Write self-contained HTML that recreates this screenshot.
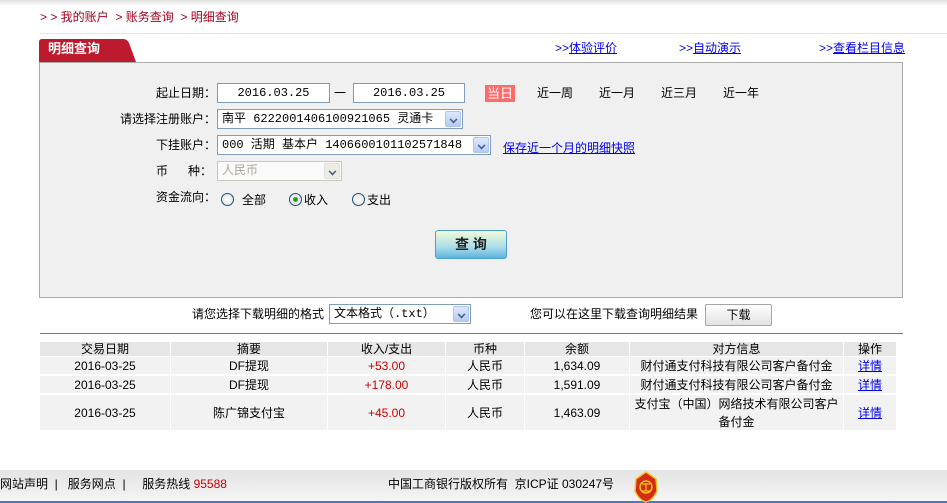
<!DOCTYPE html>
<html><head><meta charset="utf-8"><style>
*{margin:0;padding:0;box-sizing:border-box}
body{width:947px;height:503px;position:relative;background:#fff;font-family:"Liberation Sans","Noto Sans CJK SC","WenQuanYi Zen Hei",sans-serif;font-size:12px;color:#000;overflow:hidden}
.a{position:absolute;white-space:nowrap;line-height:14px}
.topsh{position:absolute;left:0;top:0;width:947px;height:6px;background:linear-gradient(#e0e0e0,#fff)}
.red{color:#a8001e}
a,.lk{color:#0000ee;text-decoration:underline}
.inp{position:absolute;background:#fff;border:1px solid #7f9db9;height:20px;line-height:18px;font-size:12px;padding-left:4px;white-space:nowrap;font-family:"Liberation Mono","Noto Sans CJK SC",monospace}
.arr{position:absolute;right:1px;top:1px;width:16px;height:16px;background:linear-gradient(#dde8fe,#b5cbf5);border:1px solid #b0c4ee;border-radius:2px}
.arr:after{content:"";position:absolute;left:4px;top:4px;width:5px;height:5px;border-right:2px solid #4d6185;border-bottom:2px solid #4d6185;transform:rotate(45deg) scale(.8)}
.rad{position:absolute;width:13px;height:13px;border:1px solid #1c5180;border-radius:50%;background:radial-gradient(#fff,#dcdcd6)}
.row{position:absolute;left:40px;width:856px}
.c{position:absolute;top:0;height:100%;display:flex;align-items:center;justify-content:center;text-align:center;line-height:18px}
</style></head><body>
<div class="topsh"></div>
<div class="a red" style="left:40px;top:10px">&gt; &gt; 我的账户 &nbsp;&gt; 账务查询 &nbsp;&gt; 明细查询</div>
<div style="position:absolute;left:40px;top:33px;width:907px;height:1px;background:#e6e6e6"></div>
<svg style="position:absolute;left:39px;top:39px" width="98" height="23" viewBox="0 0 98 23"><path d="M0 3 Q0 0 3 0 L84 0 Q88 0 90 4 L97 23 L0 23 Z" fill="#bd1a2e"/></svg>
<div class="a" style="left:48px;top:42px;color:#fff;font-weight:bold;font-size:13px">明细查询</div>
<div class="a" style="left:555px;top:41px"><span style="color:#00e">&gt;&gt;</span><span class="lk">体验评价</span></div>
<div class="a" style="left:679px;top:41px"><span style="color:#00e">&gt;&gt;</span><span class="lk">自动演示</span></div>
<div class="a" style="left:819px;top:41px"><span style="color:#00e">&gt;&gt;</span><span class="lk">查看栏目信息</span></div>
<div style="position:absolute;left:39px;top:62px;width:864px;height:236px;background:#f0f0f0;border:1px solid #aaa"></div>

<div class="a" style="left:156px;top:86px">起止日期：</div>
<div class="inp" style="left:217px;top:83px;width:113px;text-align:center;padding:0">2016.03.25</div>
<div class="a" style="left:334px;top:86px">一</div>
<div class="inp" style="left:353px;top:83px;width:112px;text-align:center;padding:0">2016.03.25</div>
<div class="a" style="left:485px;top:85px;width:30px;height:17px;background:#ff6a6a;color:#fff;text-align:center;line-height:17px;font-size:13px">当日</div>
<div class="a" style="left:537px;top:86px">近一周</div>
<div class="a" style="left:599px;top:86px">近一月</div>
<div class="a" style="left:661px;top:86px">近三月</div>
<div class="a" style="left:723px;top:86px">近一年</div>

<div class="a" style="left:120px;top:112px">请选择注册账户：</div>
<div class="inp" style="left:217px;top:109px;width:246px">南平 6222001406100921065 灵通卡<span class="arr"></span></div>
<div class="a" style="left:156px;top:138px">下挂账户：</div>
<div class="inp" style="left:217px;top:135px;width:274px">000 活期 基本户 1406600101102571848<span class="arr"></span></div>
<div class="a" style="left:503px;top:141px"><span class="lk">保存近一个月的明细快照</span></div>
<div class="a" style="left:156px;top:164px">币&nbsp;&nbsp;&nbsp;&nbsp;&nbsp;&nbsp;种：</div>
<div class="inp" style="left:217px;top:161px;width:125px;border-color:#c9c7ba;color:#aca899;background:#fafafa">人民币<span class="arr" style="background:#eeede5;border-color:#e0dfd8"></span></div>
<div class="a" style="left:156px;top:190px">资金流向：</div>
<div class="rad" style="left:221px;top:193px"></div><div class="a" style="left:242px;top:193px">全部</div>
<div class="rad" style="left:289px;top:193px"><div style="position:absolute;left:3px;top:3px;width:5px;height:5px;border-radius:50%;background:#21a121"></div></div><div class="a" style="left:304px;top:193px">收入</div>
<div class="rad" style="left:352px;top:193px"></div><div class="a" style="left:367px;top:193px">支出</div>

<div style="position:absolute;left:435px;top:230px;width:72px;height:29px;border:1px solid #4aa0d0;border-radius:3px;background:linear-gradient(#f4fbd8,#a9dcea 60%,#5fb4dc);text-align:center;line-height:27px;font-weight:bold;font-size:14px;color:#222">查 询</div>

<div class="a" style="left:192px;top:307px">请您选择下载明细的格式</div>
<div class="inp" style="left:329px;top:304px;width:142px">文本格式（.txt）<span class="arr"></span></div>
<div class="a" style="left:530px;top:307px">您可以在这里下载查询明细结果</div>
<div style="position:absolute;left:705px;top:304px;width:67px;height:22px;border:1px solid #a5a5a5;border-radius:2px;background:linear-gradient(#fff,#e2e2e2);text-align:center;line-height:20px">下载</div>
<div style="position:absolute;left:40px;top:333px;width:863px;height:1px;background:#e84848"></div>

<div class="row" style="top:342px;height:14px;background:#e6e6e6">
<div class="c" style="left:0;width:130px">交易日期</div><div class="c" style="left:131px;width:156px">摘要</div><div class="c" style="left:288px;width:117px">收入/支出</div><div class="c" style="left:406px;width:78px">币种</div><div class="c" style="left:485px;width:104px">余额</div><div class="c" style="left:590px;width:213px">对方信息</div><div class="c" style="left:804px;width:52px">操作</div>
</div>
<div class="row" style="top:357px;height:17px;background:#f2f2f2">
<div class="c" style="left:0;width:130px">2016-03-25</div><div class="c" style="left:131px;width:156px">DF提现</div><div class="c" style="left:288px;width:117px;color:#c00">+53.00</div><div class="c" style="left:406px;width:78px">人民币</div><div class="c" style="left:485px;width:104px">1,634.09</div><div class="c" style="left:590px;width:213px">财付通支付科技有限公司客户备付金</div><div class="c lk" style="left:804px;width:52px">详情</div>
</div>
<div class="row" style="top:376px;height:17px;background:#f2f2f2">
<div class="c" style="left:0;width:130px">2016-03-25</div><div class="c" style="left:131px;width:156px">DF提现</div><div class="c" style="left:288px;width:117px;color:#c00">+178.00</div><div class="c" style="left:406px;width:78px">人民币</div><div class="c" style="left:485px;width:104px">1,591.09</div><div class="c" style="left:590px;width:213px">财付通支付科技有限公司客户备付金</div><div class="c lk" style="left:804px;width:52px">详情</div>
</div>
<div class="row" style="top:395px;height:35px;background:#f2f2f2">
<div class="c" style="left:0;width:130px">2016-03-25</div><div class="c" style="left:131px;width:156px">陈广锦支付宝</div><div class="c" style="left:288px;width:117px;color:#c00">+45.00</div><div class="c" style="left:406px;width:78px">人民币</div><div class="c" style="left:485px;width:104px">1,463.09</div><div class="c" style="left:590px;width:213px;white-space:normal;padding:0 4px">支付宝（中国）网络技术有限公司客户备付金</div><div class="c lk" style="left:804px;width:52px">详情</div>
</div>
<div style="position:absolute;left:170px;top:342px;width:1px;height:88px;background:#fff"></div>
<div style="position:absolute;left:327px;top:342px;width:1px;height:88px;background:#fff"></div>
<div style="position:absolute;left:445px;top:342px;width:1px;height:88px;background:#fff"></div>
<div style="position:absolute;left:524px;top:342px;width:1px;height:88px;background:#fff"></div>
<div style="position:absolute;left:629px;top:342px;width:1px;height:88px;background:#fff"></div>
<div style="position:absolute;left:843px;top:342px;width:1px;height:88px;background:#fff"></div>

<div style="position:absolute;left:0;top:470px;width:947px;height:31px;background:linear-gradient(#e4e4e4,#f4f4f4)"></div>
<div style="position:absolute;left:0;top:501px;width:947px;height:2px;background:#3a7bd5"></div>
<div class="a" style="left:0;top:477px">网站声明 &nbsp;| &nbsp;&nbsp;服务网点 &nbsp;| &nbsp;&nbsp;&nbsp;&nbsp;服务热线 <span style="color:#c00">95588</span></div>
<div class="a" style="left:388px;top:477px">中国工商银行版权所有 &nbsp;京ICP证 030247号</div>
<svg style="position:absolute;left:633px;top:471px" width="26" height="32" viewBox="0 0 26 32"><path d="M13 1 L23 8 L24 20 Q20 29 13 31 Q6 29 2 20 L3 8 Z" fill="#d42a16" stroke="#f3c21c" stroke-width="1.5"/><circle cx="13" cy="16" r="6" fill="none" stroke="#f3c21c" stroke-width="1.5"/><path d="M9 13h8M13 13v7M9 20h8" stroke="#f3c21c" stroke-width="1.3"/></svg>
</body></html>
